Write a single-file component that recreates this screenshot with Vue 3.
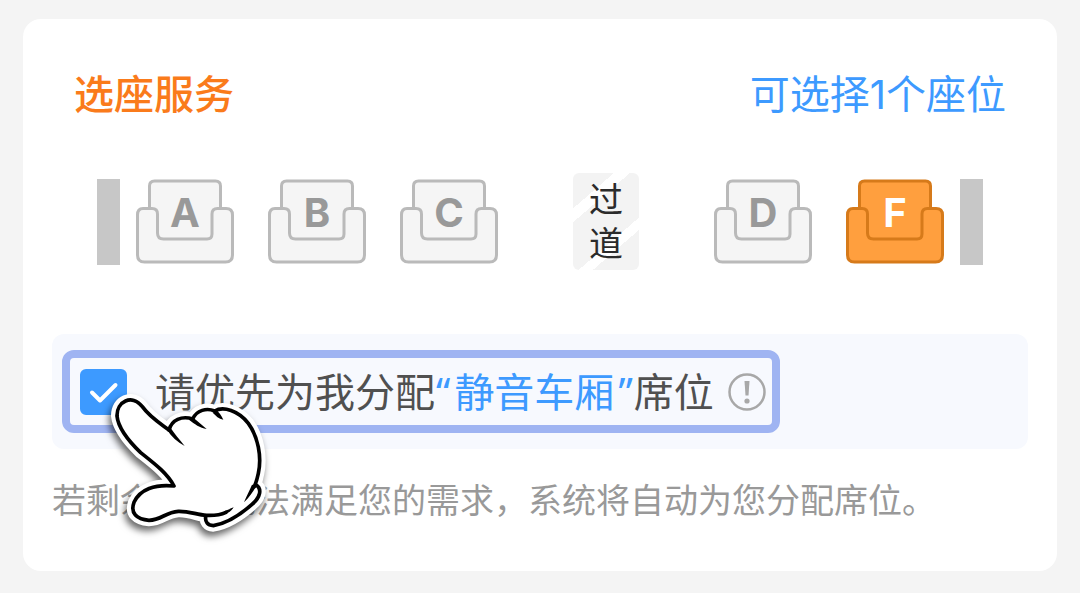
<script setup>
import { ref } from 'vue'

const leftSeats = ['A', 'B', 'C']
const rightSeats = ['D', 'F']
const selected = ref('F')
const quiet = ref(true)
</script>

<template>
  <main class="page">
    <section class="card">
      <header class="head">
        <h1 class="title">选座服务</h1>
        <p class="hint">可选择1个座位</p>
      </header>

      <div class="seats">
        <div class="group">
          <span class="wall"></span>
          <div class="row">
            <button
              v-for="s in leftSeats"
              :key="s"
              type="button"
              class="seat"
              :class="{ active: selected === s }"
              @click="selected = s"
            >
              <svg class="shape" viewBox="0 0 98 85" aria-hidden="true">
                <path class="back" d="M16 20H82V64H16Z" />
                <path d="M13.500 29.500V7Q13.500 2 18.500 2H79.500Q84.500 2 84.500 7V29.500" />
                <path d="M7 29.500H16Q21.500 29.500 21.500 35V54Q21.500 60 27.500 60H71Q76 60 76 55V35Q76 29.500 81.500 29.500H90Q96.500 29.500 96.500 36V76Q96.500 83 89.500 83H8.500Q1.500 83 1.500 76V36Q1.500 29.500 7 29.500Z" />
              </svg>
              <span class="letter">{{ s }}</span>
            </button>
          </div>
        </div>

        <div class="aisle"><span>过</span><span>道</span></div>

        <div class="group">
          <div class="row">
            <button
              v-for="s in rightSeats"
              :key="s"
              type="button"
              class="seat"
              :class="{ active: selected === s }"
              @click="selected = s"
            >
              <svg class="shape" viewBox="0 0 98 85" aria-hidden="true">
                <path class="back" d="M16 20H82V64H16Z" />
                <path d="M13.500 29.500V7Q13.500 2 18.500 2H79.500Q84.500 2 84.500 7V29.500" />
                <path d="M7 29.500H16Q21.500 29.500 21.500 35V54Q21.500 60 27.500 60H71Q76 60 76 55V35Q76 29.500 81.500 29.500H90Q96.500 29.500 96.500 36V76Q96.500 83 89.500 83H8.500Q1.500 83 1.500 76V36Q1.500 29.500 7 29.500Z" />
              </svg>
              <span class="letter">{{ s }}</span>
            </button>
          </div>
          <span class="wall"></span>
        </div>
      </div>

      <div class="panel">
        <div class="focus">
          <span class="tick">
            <input id="quiet" v-model="quiet" type="checkbox" class="box" />
            <svg v-if="quiet" class="mark" viewBox="0 0 47 46" aria-hidden="true">
              <path d="M12 23.500L20 31.500L35.500 16" />
            </svg>
          </span>
          <label for="quiet" class="label">请优先为我分配<em><span class="open">“</span>静音车厢<span class="close">”</span></em>席位</label>
          <button type="button" class="info" aria-label="说明">
            <svg viewBox="0 0 38 38" aria-hidden="true">
              <circle class="ring" cx="19" cy="19" r="17.500" />
              <path class="bang" d="M16.500 8H21.500L20.500 22.500H17.500Z" />
              <circle class="bang" cx="19" cy="28" r="2.600" />
            </svg>
          </button>
        </div>

        <svg class="hand" viewBox="171 150 510 450" aria-hidden="true">
          <path class="halo" d="M372 438C352 400 315 372 272 338C245 312 205 268 201 228C200 185 245 160 277 200C300 232 330 250 357 270C365 240 395 228 428 237C440 210 470 203 494 213C520 198 565 212 595 250C624 290 636 350 625 400L617 434C637 446 632 472 605 494C570 525 530 550 490 557C472 556 465 545 467 529C440 525 420 513 385 514C345 517 335 540 297 541C260 538 240 520 252 487C270 448 315 432 372 438Z" />
          <path class="ink" d="M357 270C330 250 300 232 277 200C245 160 200 185 201 228C205 268 245 312 272 338C315 372 352 400 372 438C315 432 270 448 252 487C240 520 260 538 297 541C335 540 345 517 385 514C420 513 440 525 470 526C495 527 515 523 528 517" />
          <path class="ink" d="M357 270C365 240 395 226 428 237C440 210 470 203 494 213C520 198 565 212 595 250C624 290 636 350 625 400Q621 420 613 440" />
          <path class="ink" d="M617 434C637 446 632 472 605 494C570 525 530 550 490 557C472 556 465 545 467 530" />
          <path class="taper" d="M350 268L362 264C372 280 388 298 404 318C382 307 364 290 350 268ZM418 240L429 233C441 242 454 252 470 267C450 264 433 252 418 240ZM488 218L500 211C508 218 514 227 520 239C506 236 498 228 488 218ZM606 434L620 436C610 455 598 472 582 487C590 468 598 452 606 434ZM522 514C532 511 540 506 551 502C545 512 536 518 526 522Z" />
        </svg>
      </div>

      <p class="note">若剩余席位无法满足您的需求，系统将自动为您分配席位。</p>
    </section>
  </main>
</template>

<style>
body {
  margin: 0;
  background: #f4f4f4;
}
</style>

<style scoped>
.page {
  box-sizing: border-box;
  padding: 19px 23px 22px;
  font-family: Inter, "Noto Sans CJK SC", sans-serif;
}

.card {
  box-sizing: border-box;
  padding: 46px 29px 45px;
  border-radius: 18px;
  background: #fff;
}

.head {
  display: flex;
  justify-content: space-between;
  align-items: center;
  padding: 0 22px;
}

.title,
.hint {
  margin: 0;
  font-size: 40px;
  line-height: 60px;
  white-space: nowrap;
}

.title {
  color: #fa7b1b;
  font-weight: 500;
}

.hint {
  color: #3d9aff;
  font-weight: 400;
}

.seats {
  display: flex;
  justify-content: space-between;
  align-items: center;
  margin-top: 48px;
  padding: 0 45px;
}

.group {
  display: flex;
  align-items: center;
  gap: 16px;
}

.row {
  display: flex;
  gap: 34px;
}

.wall {
  width: 23px;
  height: 86px;
  background: #c7c7c7;
}

.seat {
  display: grid;
  width: 98px;
  height: 85px;
  padding: 0;
  border: 0;
  background: none;
  color: #999;
  font-family: inherit;
}

.shape,
.letter {
  grid-area: 1 / 1;
}

.shape {
  display: block;
  width: 98px;
  height: 85px;
  fill: #f5f5f5;
  stroke: #bababa;
  stroke-width: 3;
}

.shape .back {
  stroke: none;
}

.letter {
  z-index: 1;
  font-size: 40px;
  font-weight: 700;
  line-height: 68px;
  text-align: center;
}

.active {
  color: #fff;
}

.active .shape {
  fill: #ff9f3e;
  stroke: #d67a1a;
}

.aisle {
  display: flex;
  flex-direction: column;
  align-items: center;
  justify-content: center;
  width: 66px;
  height: 97px;
  border-radius: 6px;
  background: linear-gradient(139deg, #f3f3f3 23%, #fff 23%, #fff 32%, #f3f3f3 32%, #f3f3f3 66%, #fff 66%, #fff 74%, #f3f3f3 74%);
  color: #2b2b2b;
  font-size: 34px;
  line-height: 44px;
}

.panel {
  position: relative;
  display: flex;
  align-items: center;
  box-sizing: border-box;
  height: 115px;
  margin-top: 64px;
  padding: 0 10px;
  border-radius: 12px;
  background: #f7f9fe;
}

.focus {
  display: flex;
  align-items: center;
  box-sizing: border-box;
  height: 83px;
  padding: 0 6px 0 10px;
  border: 8px solid #9fb4f2;
  border-radius: 12px;
}

.tick {
  display: grid;
  margin-right: 28px;
}

.box,
.mark {
  grid-area: 1 / 1;
  width: 47px;
  height: 46px;
}

.box {
  appearance: none;
  margin: 0;
  border: 2px solid #c7c7c7;
  border-radius: 6px;
  background: #fff;
}

.box:checked {
  border-color: #3d9aff;
  background: #3d9aff;
}

.mark {
  z-index: 1;
  fill: none;
  stroke: #fff;
  stroke-width: 4;
  stroke-linecap: round;
  stroke-linejoin: round;
  pointer-events: none;
}

.label {
  color: #505050;
  font-family: "Noto Sans", "Noto Sans CJK SC", sans-serif;
  font-size: 40px;
  line-height: 60px;
  white-space: nowrap;
}

.label em {
  color: #3d9aff;
  font-style: normal;
}

.open {
  margin: 0 4px 0 1px;
}

.close {
  margin: 0 1px 0 4px;
}

.info {
  width: 38px;
  height: 38px;
  margin-left: 14px;
  padding: 0;
  border: 0;
  background: none;
}

.info svg {
  display: block;
}

.ring {
  fill: none;
  stroke: #a8a8a8;
  stroke-width: 2.500;
}

.bang {
  fill: #a8a8a8;
}

.hand {
  position: absolute;
  top: 56px;
  left: 55px;
  width: 170px;
  height: 150px;
  overflow: visible;
  pointer-events: none;
}

.halo {
  fill: #fff;
  stroke: #fff;
  stroke-width: 36;
  stroke-linejoin: round;
  filter: drop-shadow(-6px 14px 11px rgba(0, 0, 0, 0.6));
}

.ink {
  fill: none;
  stroke: #000;
  stroke-width: 11;
  stroke-linecap: round;
  stroke-linejoin: round;
}

.taper {
  fill: #000;
}

.note {
  margin: 27px 0 0;
  color: #999;
  font-size: 34px;
  line-height: 50px;
}
</style>
